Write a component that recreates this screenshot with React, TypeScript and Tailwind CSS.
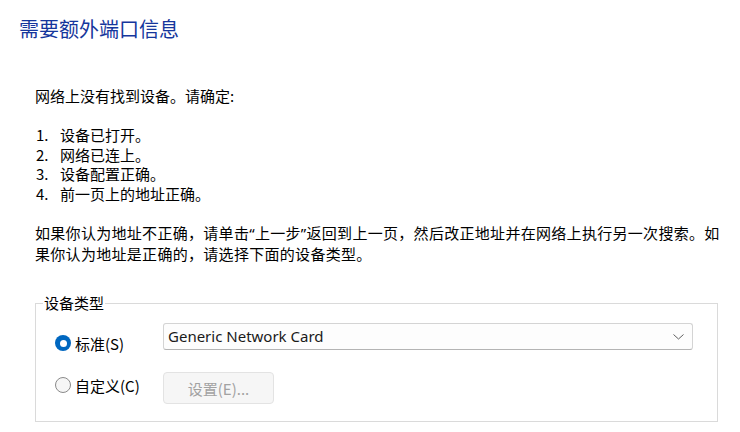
import React from "react";

const cjk = "font-['Microsoft_YaHei','Noto_Sans_CJK_SC',sans-serif]";
const q = "font-['Noto_Sans',sans-serif]";

export default function App() {
  return (
    <div className={`w-[740px] h-[432px] bg-white text-black ${cjk} overflow-hidden`}>
      <div className="pl-[19px] pt-[15px] text-[20px] leading-[28px] text-[#15369c]">
        需要额外端口信息
      </div>
      <div className="pl-[35px] pt-[43px] text-[15px] leading-[19.6px]">
        <p>网络上没有找到设备。请确定:</p>
        <div className="h-[19.6px]" />
        <ol>
          {["设备已打开。", "网络已连上。", "设备配置正确。", "前一页上的地址正确。"].map((t, i) => (
            <li key={i} className="flex">
              <span className="w-[25px] pl-[1px]">{i + 1}.</span>
              <span>{t}</span>
            </li>
          ))}
        </ol>
        <div className="h-[19.6px]" />
        <p className="w-[685px] tracking-[0.3px]">
          如果你认为地址不正确，请单击<span className={q}>“</span>上一步<span className={q}>”</span>返回到上一页，然后改正地址并在网络上执行另一次搜索。如果你认为地址是正确的，请选择下面的设备类型。
        </p>
        <fieldset className="mt-[30px] w-[683px] border border-[#dadada] pb-[17px]">
          <legend className="ml-[7px] px-[1px] text-[15px] leading-[20px]">设备类型</legend>
          <div className="flex mt-[10px]">
            <div className="w-[127px] pl-[19px] flex items-center gap-[4px] h-[20px] mt-[10px]">
              <span className="w-[16px] h-[16px] rounded-full bg-[#0067c0] flex items-center justify-center">
                <span className="w-[7px] h-[7px] rounded-full bg-white" />
              </span>
              <span>标准(S)</span>
            </div>
            <div className="w-[530px] h-[27px] rounded-[3px] border border-[#d4d4d4] border-b-[#b4b4b4] bg-[#fdfdfd] flex items-center justify-between pl-[4px] pr-[8px]">
              <span className="font-['Noto_Sans',sans-serif] text-[15px] text-[#1a1a1a]">Generic Network Card</span>
              <svg width="11" height="6" viewBox="0 0 11 6" fill="none">
                <path d="M0.5 0.5 L5.5 5 L10.5 0.5" stroke="#5f5f5f" strokeWidth="1" />
              </svg>
            </div>
          </div>
          <div className="flex mt-[19px]">
            <div className="w-[127px] pl-[19px] flex items-center gap-[4px] h-[20px] mt-[3px]">
              <span className="w-[16px] h-[16px] rounded-full border border-[#8a8a8a] bg-[#f6f6f6]" />
              <span>自定义(C)</span>
            </div>
            <div className="w-[111px] h-[32px] rounded-[4px] border border-[#e3e3e3] bg-[#f6f6f6] flex items-center justify-center text-[15px] text-[#a2a2a2]">
              设置(E)...
            </div>
          </div>
        </fieldset>
      </div>
    </div>
  );
}
